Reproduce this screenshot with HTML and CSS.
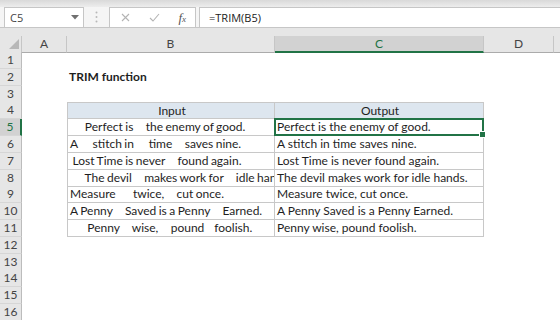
FILE: index.html
```html
<!DOCTYPE html>
<html lang="en">
<head>
    <meta charset="UTF-8">
    <title>TRIM function</title>
    <link rel="stylesheet" href="styles.css">
</head>
<body>
    <div class="formula-bar">
        <div class="name-box">
            <span>C5</span>
            <svg class="drop" width="8" height="5" viewBox="0 0 8 5"><path d="M0 0h8L4 4.5z" fill="#707070"/></svg>
        </div>
        <div class="grip">
            <svg width="3" height="12" viewBox="0 0 3 12"><circle cx="1.5" cy="1.5" r="1" fill="#b8b8b8"/><circle cx="1.5" cy="6" r="1" fill="#b8b8b8"/><circle cx="1.5" cy="10.5" r="1" fill="#b8b8b8"/></svg>
        </div>
        <div class="fx-box">
            <svg width="9" height="9" viewBox="0 0 9 9"><path d="M1 1l7 7M8 1L1 8" stroke="#b4b4b4" stroke-width="1.1" fill="none"/></svg>
            <svg width="11" height="9" viewBox="0 0 11 9"><path d="M1 5l3 3 6-7" stroke="#b4b4b4" stroke-width="1.1" fill="none"/></svg>
            <span class="fx">f<small>x</small></span>
        </div>
        <div class="formula">=TRIM(B5)</div>
    </div>
    <div class="band"></div>

    <div class="sheet">
        <div class="row head">
            <div class="corner"><svg width="10" height="10" viewBox="0 0 10 10"><path d="M10 0v10H0z" fill="#b8b8b8"/></svg></div>
            <div class="col">A</div>
            <div class="col">B</div>
            <div class="col active">C</div>
            <div class="col">D</div>
            <div class="col"></div>
        </div>

        <div class="row"><div class="rh">1</div></div>
        <div class="row"><div class="rh">2</div><div></div><div class="cell title">TRIM function</div></div>
        <div class="row"><div class="rh">3</div></div>
        <div class="row">
            <div class="rh">4</div><div></div>
            <div class="cell t tb th first">Input</div>
            <div class="cell t tc th first">Output</div>
        </div>
        <div class="row">
            <div class="rh active">5</div><div></div>
            <div class="cell t tb">      Perfect is     the enemy of good.</div>
            <div class="cell t tc selected">Perfect is the enemy of good.</div>
        </div>
        <div class="row">
            <div class="rh">6</div><div></div>
            <div class="cell t tb">A      stitch in      time     saves nine.</div>
            <div class="cell t tc">A stitch in time saves nine.</div>
        </div>
        <div class="row">
            <div class="rh">7</div><div></div>
            <div class="cell t tb"> Lost Time is never     found again.</div>
            <div class="cell t tc">Lost Time is never found again.</div>
        </div>
        <div class="row">
            <div class="rh">8</div><div></div>
            <div class="cell t tb">      The devil     makes work for     idle hands.</div>
            <div class="cell t tc">The devil makes work for idle hands.</div>
        </div>
        <div class="row">
            <div class="rh">9</div><div></div>
            <div class="cell t tb">Measure       twice,     cut once.</div>
            <div class="cell t tc">Measure twice, cut once.</div>
        </div>
        <div class="row">
            <div class="rh">10</div><div></div>
            <div class="cell t tb">A Penny     Saved is a Penny     Earned.</div>
            <div class="cell t tc">A Penny Saved is a Penny Earned.</div>
        </div>
        <div class="row">
            <div class="rh">11</div><div></div>
            <div class="cell t tb">       Penny     wise,     pound    foolish.</div>
            <div class="cell t tc">Penny wise, pound foolish.</div>
        </div>
        <div class="row"><div class="rh">12</div></div>
        <div class="row"><div class="rh">13</div></div>
        <div class="row"><div class="rh">14</div></div>
        <div class="row"><div class="rh">15</div></div>
        <div class="row"><div class="rh">16</div></div>
    </div>
</body>
</html>
```

FILE: styles.css
```css
body {
    margin: 0;
    width: 560px;
    height: 320px;
    overflow: hidden;
    background-color: #fff;
    font-family: Lato, "Open Sans", sans-serif;
    color: #1e1e1e;
}

/* formula bar */
.formula-bar {
    display: flex;
    height: 20px;
    padding-top: 7px;
    background: linear-gradient(#d9d9d9, #ededed 7px, #f5f5f5 7px);
    border-bottom: 1px solid #c6c6c6;
    font-family: "Open Sans", sans-serif;
    font-size: 11px;
}

.name-box {
    display: flex;
    align-items: center;
    justify-content: space-between;
    width: 80px;
    margin-left: 4px;
    padding: 0 4px 0 5px;
    box-sizing: border-box;
    background-color: #fff;
    border: 1px solid #c6c6c6;
    border-bottom: none;
    color: #444;
}

.grip {
    display: flex;
    align-items: center;
    justify-content: center;
    width: 25px;
}

.fx-box {
    display: flex;
    align-items: center;
    justify-content: space-between;
    width: 87px;
    padding: 0 9px 0 11px;
    box-sizing: border-box;
    background-color: #fff;
    border: 1px solid #c6c6c6;
    border-bottom: none;
}

.fx {
    font-family: "Liberation Serif", serif;
    font-style: italic;
    font-size: 13px;
    color: #555;
}

.fx small {
    font-size: 9px;
}

.formula {
    flex: 1;
    margin-left: 3px;
    padding-left: 9px;
    display: flex;
    align-items: center;
    background-color: #fff;
    border-left: 1px solid #c6c6c6;
    border-top: 1px solid #c6c6c6;
    color: #222;
}

.band {
    height: 8px;
    background-color: #e6e6e6;
}

/* grid */
.row {
    display: grid;
    grid-template-columns: 22px 45px 208px 209px 70px 1fr;
    height: 16.8px;
    font-size: 12px;
}

.row.head {
    height: 16px;
    background-color: #e6e6e6;
}

.corner {
    display: flex;
    align-items: flex-end;
    justify-content: flex-end;
    padding: 0 2px 3px 0;
    border-right: 1px solid #c6c6c6;
    border-bottom: 1px solid #ababab;
    box-sizing: border-box;
}

.col {
    text-align: center;
    line-height: 15px;
    color: #444;
    border-right: 1px solid #c6c6c6;
    border-bottom: 1px solid #ababab;
    box-sizing: border-box;
}

.col:last-child {
    border-right: none;
}

.col.active {
    background-color: #d2d2d2;
    color: #217346;
    border-bottom: 2px solid #217346;
}

.rh {
    text-align: center;
    line-height: 16px;
    background-color: #e6e6e6;
    color: #444;
    border-right: 1px solid #bcbcbc;
    border-bottom: 1px solid #d6d6d6;
    box-sizing: border-box;
}

.rh.active {
    background-color: #d2d2d2;
    color: #217346;
    border-right: 2px solid #217346;
}

.cell {
    padding-left: 2px;
    line-height: 16px;
    white-space: pre;
    box-sizing: border-box;
}

.title {
    font-weight: bold;
}

.t {
    overflow: hidden;
    border-bottom: 1px solid #c8c8c8;
    border-right: 1px solid #c8c8c8;
}

.t.first {
    border-top: 1px solid #c8c8c8;
    line-height: 15px;
}

.tb {
    border-left: 1px solid #c8c8c8;
    word-spacing: -0.6px;
}

.th {
    text-align: center;
    background-color: #dde6ef;
}

.selected {
    position: relative;
    overflow: visible;
}

.selected::after {
    content: '';
    position: absolute;
    top: -1px;
    left: -1px;
    right: -1px;
    bottom: -1px;
    border: 2px solid #217346;
}

.selected::before {
    content: '';
    position: absolute;
    right: -3px;
    bottom: -3px;
    width: 5px;
    height: 5px;
    background-color: #217346;
    border: 1px solid #fff;
    z-index: 1;
}
```
